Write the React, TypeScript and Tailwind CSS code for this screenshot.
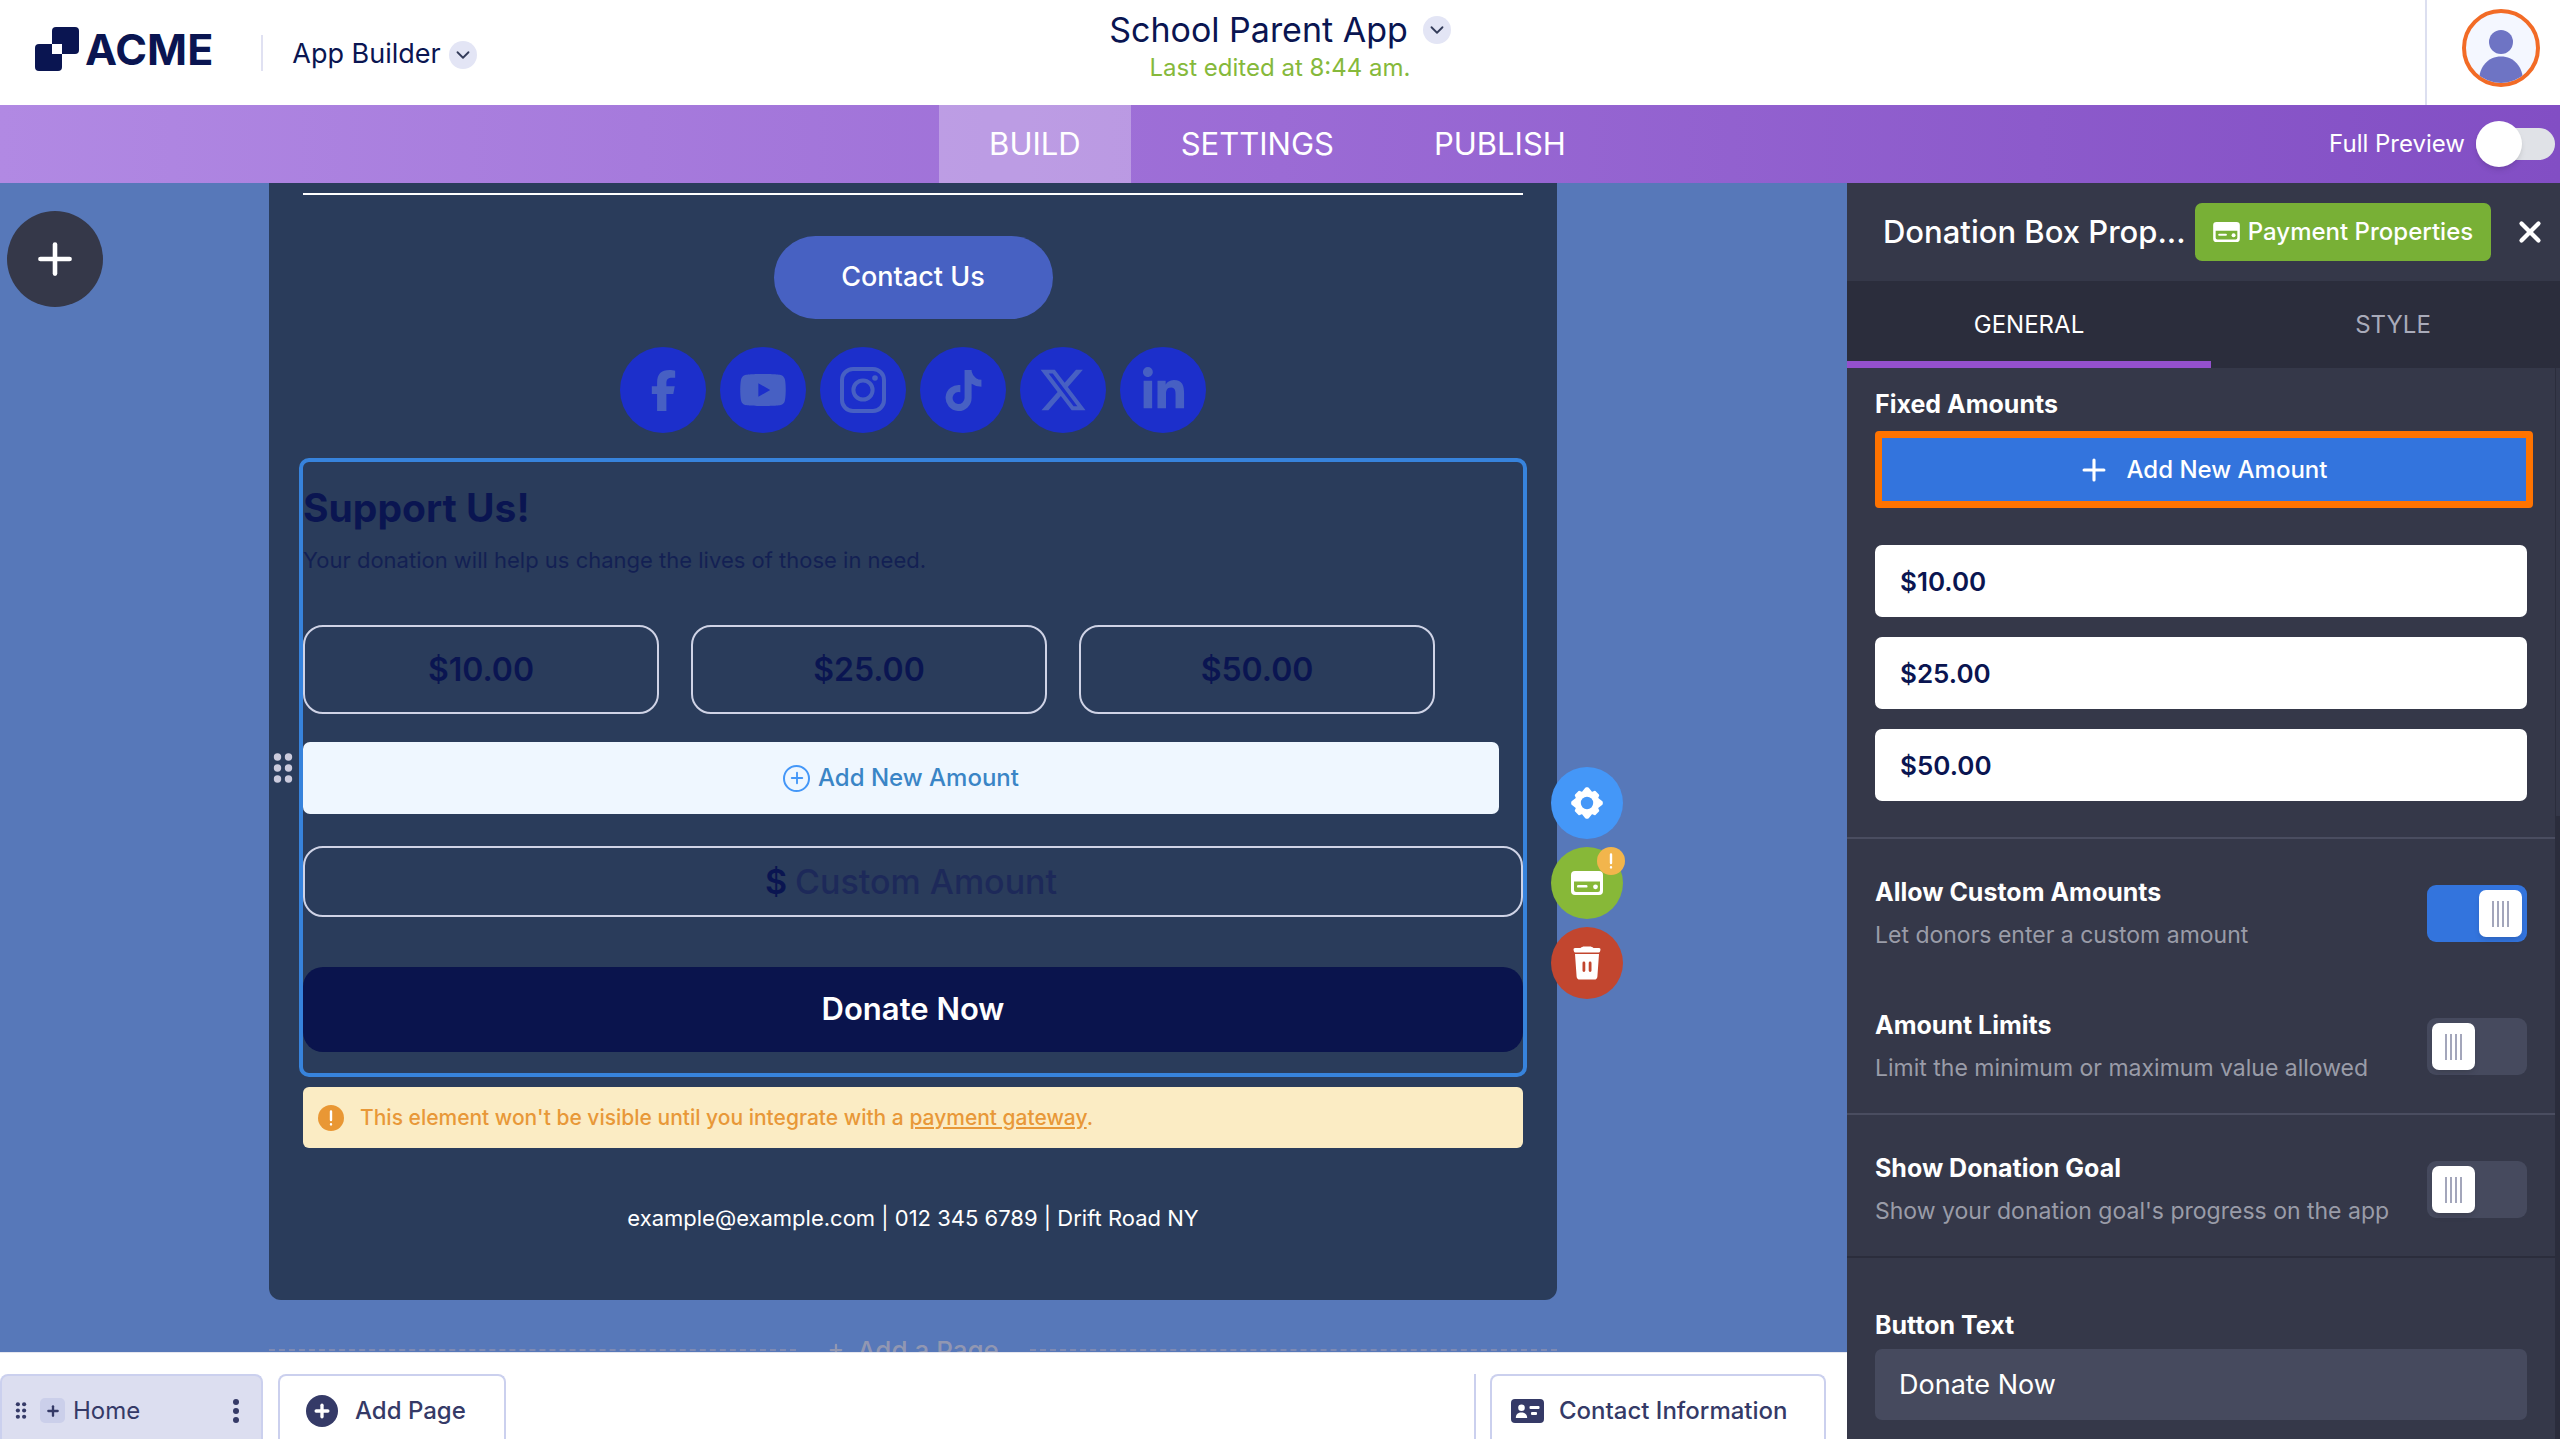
import React from 'react';
import { ChevronDown, Plus, X } from 'lucide-react';
import { FaFacebookF, FaYoutube, FaTiktok, FaXTwitter, FaLinkedinIn } from 'react-icons/fa6';

const amounts = ["$10.00", "$25.00", "$50.00"];

const InstagramIcon = () => (
  <svg viewBox="0 0 46 46" className="w-[46px] h-[46px]" fill="none" stroke="currentColor">
    <rect x="2" y="2" width="42" height="42" rx="11" strokeWidth="4" />
    <circle cx="23" cy="23" r="9.6" strokeWidth="4" />
    <circle cx="35" cy="11" r="2.8" fill="currentColor" stroke="none" />
  </svg>
);

const socials = [
  { name: "Facebook", icon: <FaFacebookF className="w-[41px] h-[41px]" /> },
  { name: "YouTube", icon: <FaYoutube className="w-[48px] h-[44px]" /> },
  { name: "Instagram", icon: <InstagramIcon /> },
  { name: "TikTok", icon: <FaTiktok className="w-[41px] h-[41px]" /> },
  { name: "X", icon: <FaXTwitter className="w-[50px] h-[50px]" /> },
  { name: "LinkedIn", icon: <FaLinkedinIn className="w-[47px] h-[47px]" /> }
];

const CardIcon = ({ className }: { className: string }) => (
  <svg viewBox="0 0 32 24" className={className}>
    <path
      fill="currentColor"
      fillRule="evenodd"
      d="M4 0h24a4 4 0 0 1 4 4v16a4 4 0 0 1-4 4H4a4 4 0 0 1-4-4V4a4 4 0 0 1 4-4zM3 10.5V19a2 2 0 0 0 2 2h22a2 2 0 0 0 2-2v-8.5z"
    />
    <rect x="6" y="14" width="10.500" height="2.6" rx="1.2" fill="currentColor" />
    <circle cx="24.5" cy="15.800" r="2.400" fill="currentColor" />
  </svg>
);

const GearIcon = () => (
  <svg viewBox="-17 -17 34 34" className="w-[34px] h-[34px]">
    <g fill="currentColor" stroke="currentColor" strokeWidth="2.4" strokeLinejoin="round">
      <circle r="10.5" />
      {[0, 90, 180, 270].map((deg) => (
        <g key={deg} transform={`rotate(${deg})`}>
          <path d="M-4-10.5 L-0.8-14.6 H0.8 L4-10.5z" />
          <path d="M-3.6-10 L-2.4-13.2 H2.4 L3.6-10z" transform="rotate(45)" />
        </g>
      ))}
    </g>
    <circle r="6.2" fill="#4497f8" />
  </svg>
);

const TrashIcon = () => (
  <svg viewBox="0 0 28 34" className="w-[28px] h-[34px]" fill="currentColor">
    <path d="M2 2h5.500C8.500 1 10 .5 11 .5h6c1 0 2.500.5 3.500 1.500H26a1.500 1.500 0 0 1 1.500 1.700l-.4 1.600a1.500 1.500 0 0 1-1.500 1.200H2.400A1.500 1.500 0 0 1 .9 5.300L.5 3.700A1.500 1.500 0 0 1 2 2z" />
    <path
      fillRule="evenodd"
      d="M2 8h24l-1.600 22.400a3.300 3.300 0 0 1-3.300 3.100H6.900a3.300 3.300 0 0 1-3.300-3.100zM9.500 17v7.500a1.400 1.400 0 0 0 2.800 0V17a1.400 1.400 0 0 0-2.800 0zm6.200 0v7.500a1.400 1.400 0 0 0 2.800 0V17a1.400 1.400 0 0 0-2.800 0z"
    />
  </svg>
);

const AlertMark = () => (
  <svg viewBox="0 0 4 16" className="h-4 w-1" fill="none" stroke="#fff" strokeWidth="2.4" strokeLinecap="round">
    <path d="M2 1.500v8.500M2 14.300v.1" />
  </svg>
);

const ContactCardIcon = () => (
  <svg viewBox="0 0 33 24" className="w-[33px] h-[24px]">
    <rect width="33" height="24" rx="4" fill="#353a67" />
    <g fill="#fff">
      <circle cx="10.5" cy="8.8" r="3.3" />
      <path d="M4.8 19c0-3.600 2.400-5.400 5.700-5.400s5.700 1.800 5.700 5.400z" />
      <rect x="18.5" y="7" width="10" height="3" rx="1" />
      <rect x="20" y="13" width="6" height="3" rx="1" />
    </g>
  </svg>
);

const Dots = ({ className }: { className: string }) => (
  <svg viewBox="0 0 20 30" className={className} fill="currentColor">
    {[4, 15, 26].map((y) => (
      <React.Fragment key={y}>
        <circle cx="4.5" cy={y} r="3.7" />
        <circle cx="15.5" cy={y} r="3.7" />
      </React.Fragment>
    ))}
  </svg>
);

const Caret = () => (
  <span className="flex w-7 h-7 items-center justify-center rounded-full bg-[#e3e5f5]">
    <ChevronDown size={22} strokeWidth={2} className="text-[#343c5a]" />
  </span>
);

const settings = [
  [
    { id: "custom", title: "Allow Custom Amounts", text: "Let donors enter a custom amount", on: true },
    { id: "limits", title: "Amount Limits", text: "Limit the minimum or maximum value allowed", on: false }
  ],
  [{ id: "goal", title: "Show Donation Goal", text: "Show your donation goal's progress on the app", on: false }]
];

const Toggle = ({ id, on }: { id: string; on: boolean }) => (
  <span className="relative h-[57px] w-[100px] shrink-0">
    <input
      id={id}
      type="checkbox"
      defaultChecked={on}
      className="peer block h-full w-full appearance-none rounded-[9px] bg-[#464a5e] checked:bg-[#3374dd]"
    />
    <span className="pointer-events-none absolute top-[5px] left-[5px] flex h-[47px] w-[43px] items-center justify-center gap-[3px] rounded-[7px] bg-white shadow-md peer-checked:left-[52px]">
      {[1, 2, 3, 4].map((i) => (
        <span key={i} className="h-[26px] w-[2px] bg-[#a3a6bb]" />
      ))}
    </span>
  </span>
);

const Header = () => (
  <header className="grid h-[105px] shrink-0 grid-cols-3 bg-white text-[#0a1551]">
    <div className="flex items-center pl-[35px]">
      <div className="flex items-center gap-1.5 pb-2">
        <svg viewBox="0 0 44 44" className="h-11 w-11">
          <rect x="17" y="0" width="27" height="27" rx="4" fill="#0a1551" />
          <rect x="0" y="17" width="27" height="27" rx="4" fill="#0a1551" />
          <rect x="17" y="17" width="10" height="10" fill="#fff" />
        </svg>
        <span className="text-[43px] leading-[44px] font-bold">ACME</span>
      </div>
      <span className="ml-12 h-9 w-[2px] bg-[#e0e1f2]" />
      <button className="ml-[29px] flex items-center gap-2 pt-1 text-[27px]">
        App Builder <Caret />
      </button>
    </div>
    <div className="flex flex-col items-center pt-2">
      <button className="flex items-center gap-[15px] text-[34px] leading-[44px]">
        School Parent App <Caret />
      </button>
      <p className="text-[24px] leading-[32px] text-[#86b93b]">Last edited at 8:44 am.</p>
    </div>
    <div className="flex justify-end">
      <div className="flex w-[135px] items-start border-l-2 border-[#dcdff0] pt-[9px] pl-[35px]">
        <button aria-label="Account" className="h-[78px] w-[78px] overflow-hidden rounded-full border-4 border-[#f26b26] bg-[#f4f7ff]">
          <svg viewBox="0 0 70 70" fill="#6e74c4">
            <circle cx="35" cy="29" r="12" />
            <path d="M13 68c0-14 9-24.5 22-24.5S57 54 57 68v4H13z" />
          </svg>
        </button>
      </div>
    </div>
  </header>
);

const NavBar = () => (
  <nav className="relative flex h-[78px] shrink-0 justify-center bg-gradient-to-r from-[#b189e3] via-[#9b6bd5] to-[#824ec4] pr-[5px] text-[31px] text-white">
    <a href="#build" className="flex items-center bg-white/30 px-[50px]">BUILD</a>
    <a href="#settings" className="flex items-center px-[50px]">SETTINGS</a>
    <a href="#publish" className="flex items-center px-[50px]">PUBLISH</a>
    <label className="absolute inset-y-0 right-[5px] flex items-center gap-[11px] text-[24px]">
      Full Preview
      <span className="relative flex h-[46px] w-[79px] items-center">
        <input type="checkbox" className="peer h-8 w-full appearance-none rounded-full bg-[#e0e2e7]" />
        <span className="pointer-events-none absolute top-0 left-0 h-[46px] w-[46px] rounded-full bg-white shadow-md peer-checked:left-[33px]" />
      </span>
    </label>
  </nav>
);

const DonationBox = () => (
  <section className="relative mt-[25px] -mx-1 rounded-[10px] border-4 border-[#3783dc] pt-[21px] pb-[21px] text-[#0a1551]">
    <h2 className="text-[39px] leading-[50px] font-bold">Support Us!</h2>
    <p className="mt-[11px] text-[22px] leading-[32px] opacity-70">Your donation will help us change the lives of those in need.</p>

    <div className="mt-[49px] flex gap-8">
      {amounts.map((amount) => (
        <button key={amount} className="h-[89px] w-[356px] rounded-[20px] border-2 border-[#cfd3e6] text-[32px] font-semibold">
          {amount}
        </button>
      ))}
    </div>

    <button className="mt-7 flex h-[72px] w-[1196px] max-w-full items-center justify-center gap-2 rounded-[7px] bg-[#eff7ff] text-[24px] font-medium text-[#3a85c6]">
      <span className="flex h-[27px] w-[27px] items-center justify-center rounded-full border-2 border-[#4497f8]">
        <Plus size={18} strokeWidth={2.5} className="text-[#4497f8]" />
      </span>
      Add New Amount
    </button>

    <label className="mt-8 flex h-[71px] items-center justify-center gap-2 rounded-[20px] border-2 border-[#cfd3e6] text-[34px] font-semibold">
      $
      <input
        type="text"
        aria-label="Custom Amount"
        placeholder="Custom Amount"
        className="w-[266px] bg-transparent font-medium outline-none placeholder:text-[#1d2959]"
      />
    </label>

    <button className="mt-[50px] h-[85px] w-full rounded-[20px] bg-[#0a144d] text-[31px] font-semibold text-white">Donate Now</button>

    <button aria-label="Move" className="absolute top-[291px] left-[-30px] text-[#cbcbdd]">
      <Dots className="h-[30px] w-5" />
    </button>

    {/* Element actions */}
    <div className="absolute top-[305px] right-[-100px] flex flex-col gap-2 text-white">
      <button aria-label="Settings" className="flex h-[72px] w-[72px] items-center justify-center rounded-full bg-[#4497f8]">
        <GearIcon />
      </button>
      <button aria-label="Payment" className="relative flex h-[72px] w-[72px] items-center justify-center rounded-full bg-[#87b838]">
        <CardIcon className="h-6 w-8" />
        <span className="absolute top-0 right-[-2px] flex h-7 w-7 items-center justify-center rounded-full bg-[#f2b54c]">
          <AlertMark />
        </span>
      </button>
      <button aria-label="Delete" className="flex h-[72px] w-[72px] items-center justify-center rounded-full bg-[#c2462f]">
        <TrashIcon />
      </button>
    </div>
  </section>
);

const Canvas = () => (
  <div className="relative min-h-0 flex-1 overflow-hidden bg-[#5778b9] pr-[21px]">
    <button aria-label="Add element" className="absolute top-7 left-[7px] flex h-24 w-24 items-center justify-center rounded-full bg-[#353849] text-white">
      <Plus size={50} strokeWidth={2.2} />
    </button>

    <div className="mx-auto w-[1288px] max-w-full">
      <div className="rounded-b-[12px] bg-[#2a3c5b] px-[34px] pt-[10px] pb-[66px]">
        <hr className="border-t-2 border-white" />
        <div className="mt-[41px] flex justify-center">
          <button className="h-[83px] w-[279px] rounded-full bg-[#4761c2] text-[27px] font-medium text-white">Contact Us</button>
        </div>
        <div className="mt-7 flex justify-center gap-[14px]">
          {socials.map((item) => (
            <a key={item.name} href="#social" aria-label={item.name} className="flex h-[86px] w-[86px] items-center justify-center rounded-full bg-[#1c2fcb] text-[#4760c3]">
              {item.icon}
            </a>
          ))}
        </div>

        <DonationBox />

        <div className="mt-[10px] flex h-[61px] items-center gap-4 rounded-[6px] bg-[#fbecc4] px-[15px] text-[21px] font-medium text-[#e89838]">
          <span className="flex h-[26px] w-[26px] items-center justify-center rounded-full bg-[#e99734]">
            <AlertMark />
          </span>
          <p>
            This element won't be visible until you integrate with a <a href="#gateway" className="underline">payment gateway</a>.
          </p>
        </div>

        <p className="mt-[54px] text-center text-[22px] leading-8 text-white">example@example.com | 012 345 6789 | Drift Road NY</p>
      </div>

      <div className="mt-[30px] flex h-10 items-center text-[26px] text-[#9197b2]">
        <span className="flex-1 border-t-2 border-dashed border-[#7e8ab3]" />
        <button className="flex w-[234px] items-center justify-center gap-3 font-medium">
          <Plus size={18} strokeWidth={3} /> Add a Page
        </button>
        <span className="flex-1 border-t-2 border-dashed border-[#7e8ab3]" />
      </div>
    </div>
  </div>
);

const PageBar = () => (
  <footer className="flex h-[87px] shrink-0 items-end justify-between border-t border-[#e6e7ef] bg-white pr-[21px] text-[24px] text-[#353a67]">
    <div className="flex gap-[15px]">
      <div className="flex h-[65px] w-[263px] items-center rounded-t-[8px] border-2 border-b-0 border-[#cbd0ee] bg-[#dcdef0] pt-1.5 pr-[22px] pl-[13px]">
        <Dots className="h-[17px] w-3" />
        <span className="ml-[13px] flex h-[25px] w-[25px] items-center justify-center rounded-[5px] bg-[#cbcfea]">
          <Plus size={16} strokeWidth={3.5} />
        </span>
        <span className="ml-2 flex-1">Home</span>
        <button aria-label="Page menu" className="flex flex-col gap-[3px]">
          {[1, 2, 3].map((i) => (
            <span key={i} className="h-1.5 w-1.5 rounded-full bg-[#353a67]" />
          ))}
        </button>
      </div>
      <button className="flex h-[65px] w-[228px] items-center gap-[17px] rounded-t-[8px] border-2 border-b-0 border-[#cbd0ee] pt-1.5 pl-[26px] font-medium">
        <span className="flex h-8 w-8 items-center justify-center rounded-full bg-[#353a67] text-white">
          <Plus size={20} strokeWidth={4} />
        </span>
        Add Page
      </button>
    </div>
    <div className="flex gap-[14px]">
      <span className="w-[2px] bg-[#cbd0ee]" />
      <button className="flex h-[65px] w-[336px] items-center gap-[15px] rounded-t-[8px] border-2 border-b-0 border-[#cbd0ee] pt-1.5 pl-[19px] font-medium">
        <ContactCardIcon /> Contact Information
      </button>
    </div>
  </footer>
);

const Properties = () => (
  <aside className="flex w-[713px] shrink-0 flex-col overflow-hidden bg-[#353849] text-white">
    <div className="flex h-[98px] shrink-0 items-center pr-[13px] pl-9">
      <h2 className="flex-1 text-[31px] font-medium whitespace-nowrap">Donation Box Prop...</h2>
      <button className="flex h-[58px] w-[296px] items-center justify-center gap-2 rounded-[7px] bg-[#78b036] text-[24px] font-medium whitespace-nowrap">
        <CardIcon className="h-[20px] w-[27px]" /> Payment Properties
      </button>
      <button aria-label="Close" className="ml-[22px]">
        <X size={34} strokeWidth={3} />
      </button>
    </div>

    <div role="tablist" className="flex h-[87px] shrink-0 bg-[#2b2d3c] text-[24px]">
      <button role="tab" aria-selected="true" className="w-[364px] shrink-0 border-b-[7px] border-[#9450cd] pt-2">GENERAL</button>
      <button role="tab" aria-selected="false" className="w-[364px] shrink-0 border-b-[7px] border-transparent pt-2 text-[#a9abba]">STYLE</button>
    </div>

    <div className="flex min-h-0 flex-1 overflow-hidden">
      <div className="min-w-0 flex-1">
        <div className="px-7 pt-5 pb-9">
          <h3 className="text-[25px] leading-8 font-bold">Fixed Amounts</h3>
          <button className="mt-[11px] -mr-1 flex h-[77px] w-[658px] items-center justify-center gap-5 rounded-[4px] border-[7px] border-[#ff7300] bg-[#3374dd] text-[24px] font-medium">
            <Plus size={34} strokeWidth={2.2} className="-mx-1" /> Add New Amount
          </button>
          <div className="mt-[37px] flex flex-col gap-5">
            {amounts.map((amount) => (
              <input
                key={amount}
                type="text"
                aria-label={`Amount ${amount}`}
                defaultValue={amount}
                className="h-[72px] w-full rounded-[7px] bg-white px-[25px] text-[26px] font-semibold text-[#0a1551]"
              />
            ))}
          </div>
        </div>

        {settings.map((group) => (
          <div key={group[0].id} className="border-t-2 border-[#4a4d60] px-7 pt-2">
            {group.map((item) => (
              <div key={item.id} className="flex h-[133px] items-center justify-between">
                <div>
                  <label htmlFor={item.id} className="block text-[25px] leading-[43px] font-bold">{item.title}</label>
                  <p className="text-[23px] leading-[43px] text-[#9a9ca8]">{item.text}</p>
                </div>
                <Toggle id={item.id} on={item.on} />
              </div>
            ))}
          </div>
        ))}

        <div className="border-t-2 border-[#2b2d3c] px-7 pt-[51px]">
          <label htmlFor="button-text" className="block text-[25px] leading-8 font-bold">Button Text</label>
          <input
            id="button-text"
            type="text"
            defaultValue="Donate Now"
            className="mt-2 h-[71px] w-full rounded-[7px] bg-[#464a5e] px-6 text-[27px]"
          />
        </div>
      </div>

      {/* Scroll track */}
      <div className="w-[5px] shrink-0 bg-[#2b2d3c] pl-px">
        <div className="h-[448px] bg-[#343748]" />
      </div>
    </div>
  </aside>
);

const App = () => {
  return (
    <div className="flex h-screen flex-col overflow-hidden font-['Inter',sans-serif]">
      <Header />
      <NavBar />
      <main className="flex min-h-0 flex-1">
        <div className="flex min-w-0 flex-1 flex-col">
          <Canvas />
          <PageBar />
        </div>
        <Properties />
      </main>
    </div>
  );
};

export default App;
